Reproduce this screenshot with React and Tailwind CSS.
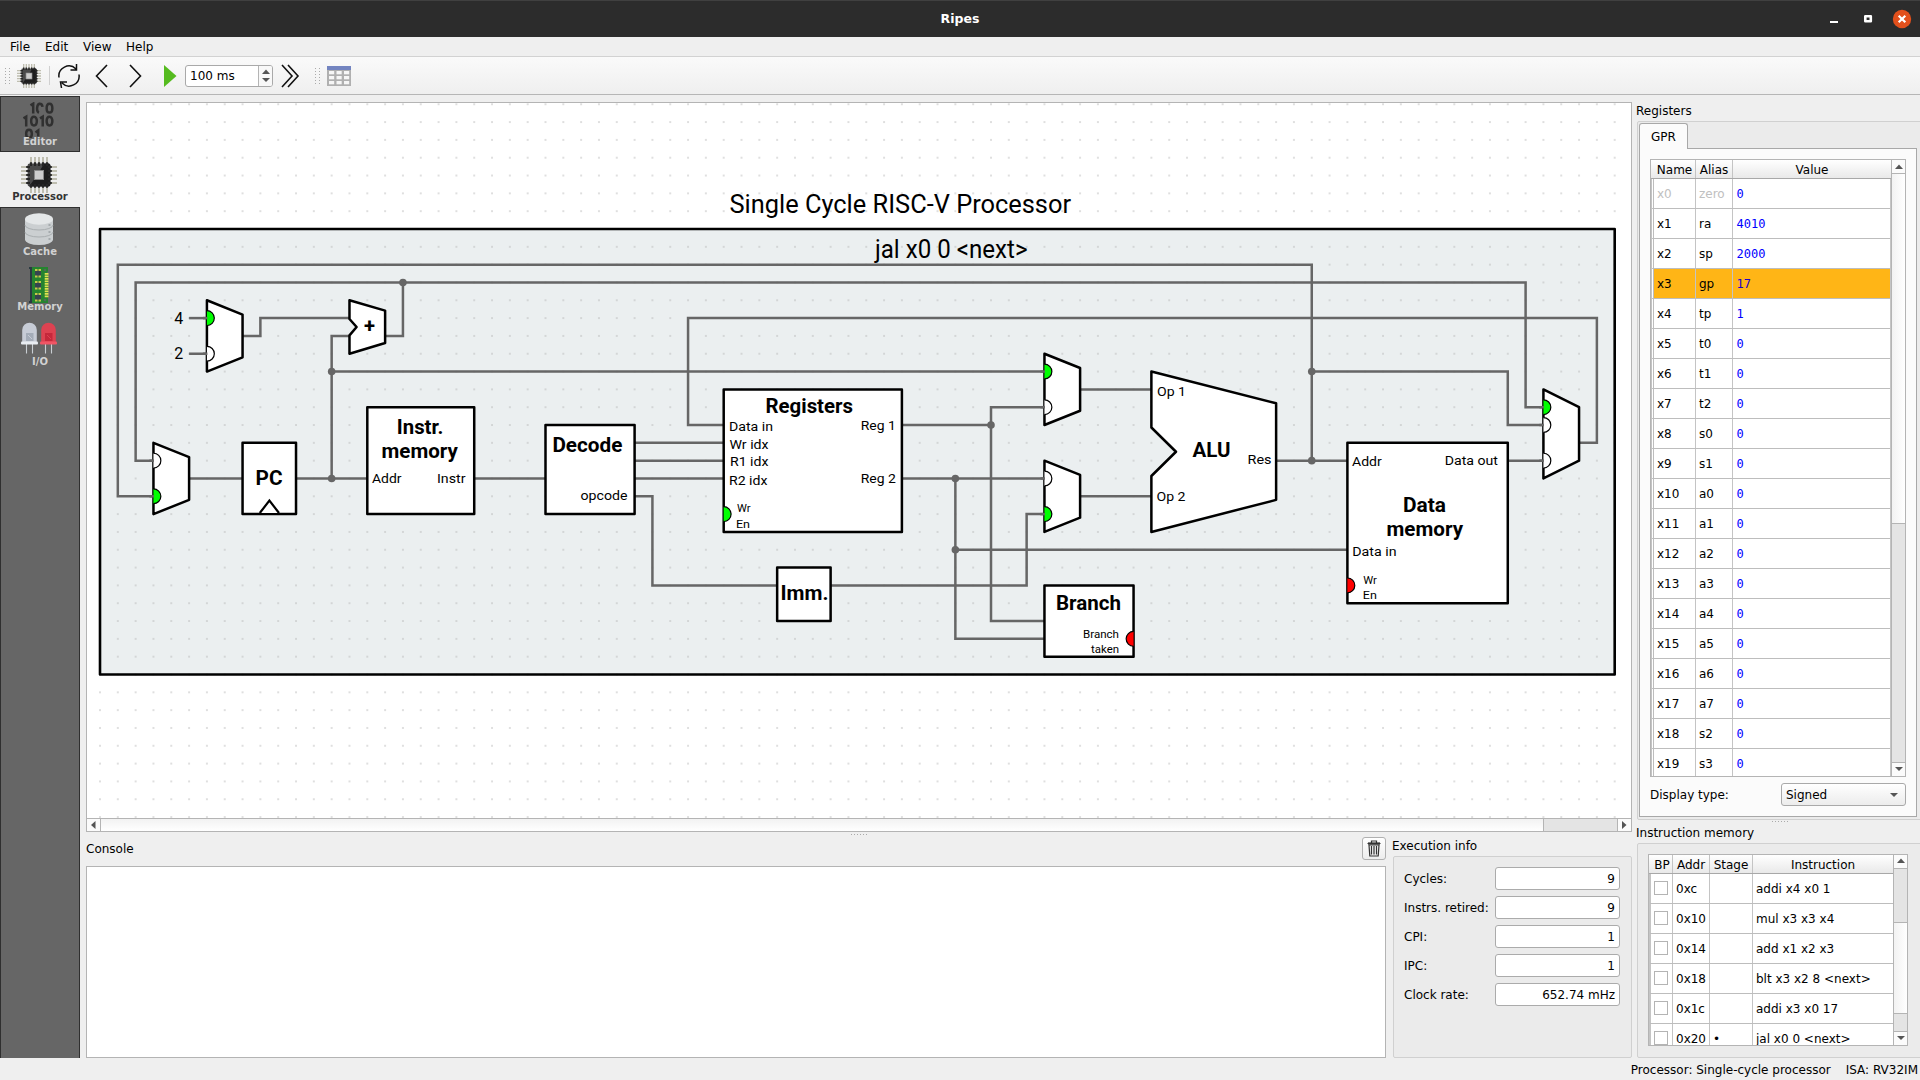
import React from "react";

const U = 17.82;
const OX = 100;
const OY = 229;
const gx = (n) => OX + n * U;
const gy = (n) => OY + n * U;
const pts = (list) => list.map(([x, y]) => `${gx(x)},${gy(y)}`).join(" ");

const WIRES = [
  [[68, 13], [68, 2], [1, 2], [1, 15], [3, 15]],
  [[66, 13], [70, 13]],
  [[16, 6], [17, 6], [17, 3]],
  [[3, 13], [2, 13], [2, 3], [80, 3], [80, 10], [81, 10]],
  [[5, 5], [6, 5]],
  [[5, 7], [6, 7]],
  [[8, 6], [9, 6], [9, 5], [14, 5]],
  [[14, 6], [13, 6], [13, 14]],
  [[13, 8], [53, 8]],
  [[5, 14], [8, 14]],
  [[11, 14], [15, 14]],
  [[21, 14], [25, 14]],
  [[30, 12], [35, 12]],
  [[30, 13], [35, 13]],
  [[30, 14], [35, 14]],
  [[30, 15], [31, 15], [31, 20], [38, 20]],
  [[35, 11], [33, 11], [33, 5], [84, 5], [84, 12], [83, 12]],
  [[45, 11], [50, 11]],
  [[53, 10], [50, 10], [50, 22], [53, 22]],
  [[45, 14], [53, 14]],
  [[48, 14], [48, 23], [53, 23]],
  [[48, 18], [70, 18]],
  [[41, 20], [52, 20], [52, 16], [53, 16]],
  [[55, 9], [59, 9]],
  [[55, 15], [59, 15]],
  [[68, 8], [79, 8], [79, 11], [81, 11]],
  [[79, 13], [81, 13]],
];

const JUNCTIONS = [[17, 3], [13, 8], [13, 14], [50, 11], [48, 14], [48, 18], [68, 8], [68, 13]];

const SHAPES = [
  [[6, 4], [8, 4.8], [8, 7.2], [6, 8]],
  [[3, 12], [5, 12.8], [5, 15.2], [3, 16]],
  [[53, 7], [55, 7.8], [55, 10.2], [53, 11]],
  [[53, 13], [55, 13.8], [55, 16.2], [53, 17]],
  [[81, 9], [83, 10], [83, 13], [81, 14]],
  [[14, 4], [16, 4.58], [16, 6.4], [14, 7], [14, 5.97], [14.4, 5.5], [14, 5.05]],
  [[59, 8], [66, 9.78], [66, 15.2], [59, 17], [59, 13.86], [60.38, 12.5], [59, 11.14]],
  [[8, 12], [11, 12], [11, 16], [8, 16]],
  [[15, 10], [21, 10], [21, 16], [15, 16]],
  [[25, 11], [30, 11], [30, 16], [25, 16]],
  [[35, 9], [45, 9], [45, 17], [35, 17]],
  [[38, 19], [41, 19], [41, 22], [38, 22]],
  [[53, 20], [58, 20], [58, 24], [53, 24]],
  [[70, 12], [79, 12], [79, 21], [70, 21]],
];

const G = "#00ff00";
const R = "#ff0000";
const W = "#ffffff";
const PORTS = [
  [6, 5, G], [6, 7, W], [3, 13, W], [3, 15, G], [53, 8, G], [53, 10, W],
  [53, 14, W], [53, 16, G], [81, 10, G], [81, 11, W], [81, 13, W],
  [35, 16, G], [70, 20, R], [58, 23, R, true],
];

// [text, left, right, baseline, size, bold]
const LABELS = [
  ["Single Cycle RISC-V Processor", 729.5, 1071, 213, 25.4],
  ["jal x0 0 <next>", 875, 1027.5, 257.5, 25.4],
  ["4", 174.3, 183.3, 323.5, 16],
  ["2", 174.3, 183.3, 359, 16],
  ["+", 364, 375, 333, 20, 1],
  ["PC", 255.5, 282.5, 484.8, 20.5, 1],
  ["Instr.", 396.8, 443.3, 434, 20.5, 1],
  ["memory", 381.5, 457.8, 458, 20.5, 1],
  ["Addr", 372, 401.5, 483, 13.6],
  ["Instr", 437, 465.5, 483, 13.6],
  ["Decode", 552.4, 622.4, 452, 20.5, 1],
  ["opcode", 580.5, 627.5, 500, 13.6],
  ["Registers", 765.5, 853, 413, 20.5, 1],
  ["Data in", 729, 773, 431, 13.6],
  ["Wr idx", 729.5, 768.5, 449, 13.6],
  ["R1 idx", 730, 768.5, 466, 13.6],
  ["R2 idx", 729, 767.5, 485, 13.6],
  ["Wr", 737, 750.5, 512, 11.5],
  ["En", 736, 750, 528, 11.5],
  ["Reg 1", 860.7, 895.8, 430, 13.6],
  ["Reg 2", 860.7, 895.8, 483, 13.6],
  ["Imm.", 780.5, 828.5, 600, 20.5, 1],
  ["Branch", 1056, 1121, 610, 20.5, 1],
  ["Branch", 1083, 1119, 638.3, 11.5],
  ["taken", 1091, 1119, 653, 11.5],
  ["ALU", 1192.5, 1230.5, 457, 20.5, 1],
  ["Op 1", 1157, 1186, 396, 13.6],
  ["Op 2", 1156.5, 1185.5, 501, 13.6],
  ["Res", 1247.5, 1271.5, 464, 13.6],
  ["Addr", 1352, 1381.7, 466, 13.6],
  ["Data out", 1444.8, 1498, 465, 13.6],
  ["Data", 1403, 1446, 512, 20.5, 1],
  ["memory", 1386.5, 1463, 536, 20.5, 1],
  ["Data in", 1352.3, 1396.5, 556, 13.6],
  ["Wr", 1363.2, 1376.8, 584, 11.5],
  ["En", 1362.8, 1376.8, 599, 11.5],
];

function Schematic() {
  return (
    <svg width="1544" height="715" viewBox="87 103 1544 715" className="block">
      <defs>
        <pattern id="dots" x={OX - 1} y={OY - 1} width={U} height={U} patternUnits="userSpaceOnUse">
          <rect x="0.2" y="0.5" width="1.6" height="1" fill="#b0b0b0" />
        </pattern>
      </defs>
      <rect x="87" y="103" width="1544" height="715" fill="#fff" />
      <rect x={gx(0)} y={gy(0)} width={85 * U} height={25 * U} fill="#ebeff0" />
      <rect x="95" y="103" width="1530" height="715" fill="url(#dots)" />
      <rect x={gx(0)} y={gy(0)} width={85 * U} height={25 * U} fill="none" stroke="#000" strokeWidth="2.6" strokeLinejoin="round" />
      {WIRES.map((w, i) => (
        <polyline key={i} points={pts(w)} fill="none" stroke="#666" strokeWidth="2.5" strokeLinecap="butt" />
      ))}
      {JUNCTIONS.map(([x, y], i) => (
        <circle key={i} cx={gx(x)} cy={gy(y)} r="3.8" fill="#666" />
      ))}
      {SHAPES.map((s, i) => (
        <polygon key={i} points={pts(s)} fill="#fff" stroke="#000" strokeWidth="2.5" strokeLinejoin="round" />
      ))}
      {PORTS.map(([x, y, color, flip], i) => (
        <path
          key={i}
          d={`M${gx(x)} ${gy(y) - 7.4}A7.4 7.4 0 0 ${flip ? 0 : 1} ${gx(x)} ${gy(y) + 7.4}`}
          fill={color}
          stroke="#000"
          strokeWidth="1.2"
        />
      ))}
      {PORTS.slice(0, 11).map(([x, y], i) => (
        <path key={i} d={`M${gx(x) - 4} ${gy(y)}h4.5`} stroke="#666" strokeWidth="2.5" />
      ))}
      <path d="M259.800 513L269.400 500.500L279 513" fill="#fff" stroke="#000" strokeWidth="2.2" />
      {LABELS.map(([t, l, r, b, s, bold], i) => (
        <text
          key={i}
          x={l}
          y={b}
          fontSize={s}
          fontWeight={bold ? 700 : 400}
          textLength={r - l}
          lengthAdjust="spacingAndGlyphs"
          className="font-['Roboto',sans-serif]"
          fill="#000"
        >
          {t}
        </text>
      ))}
    </svg>
  );
}

function Chip({ size }) {
  const legs = [10, 14, 18, 22, 26];
  return (
    <svg width={size} height={size} viewBox="0 0 36 36" className="block shrink-0">
      {legs.map((p) => (
        <path key={p} d={`M${p} 0V36M0 ${p}H36`} stroke="#bfbeb0" strokeWidth="2" />
      ))}
      <rect x="6.600" y="6.600" width="22.800" height="22.800" rx="2" fill="#4a4a4a" />
      <path d="M28 6.600L23 6.600L17 17L8 29.400H27.400a2 2 0 0 0 2 -2V8Z" fill="#1e1e1e" />
      {legs.map((p) => (
        <path key={p} d={`M${p} 5.200V9M${p} 27V30.800M5.200 ${p}H9M27 ${p}H30.800`} stroke="#262626" strokeWidth="2.200" />
      ))}
      <rect x="13.500" y="13.500" width="9" height="9" fill="#cdcdcd" stroke="#8a8a8a" strokeWidth="1" />
    </svg>
  );
}

function Binary() {
  return (
    <svg width="36" height="36" viewBox="0 0 36 36" className="block" fill="none" stroke="#303030" strokeWidth="2.5">
      <path d="M9.500 3.300L12.200 1.700V11.500M28.500 1.700c-3.800 0-3.800 8.900 0 8.900s3.800-8.900 0-8.900M19 1.700c-3.600 0-3.800 8-1 8.900M18.500 1.700c2.200 0 2.900 1.200 3 3.200" />
      <path d="M2.500 16.300L5.200 14.700V24.500M13 14.700c-3.800 0-3.800 8.700 0 8.700s3.800-8.700 0-8.700M19 16.300L21.700 14.700V24.500M28.500 14.700c-3.800 0-3.800 8.700 0 8.700s3.800-8.700 0-8.700" />
      <path d="M8 27.700c-3.800 0-3.800 8.300 0 8.300s3.800-8.300 0-8.300M14.500 30.500L17.200 28.500V34.500" />
    </svg>
  );
}

function Database() {
  return (
    <svg width="36" height="36" viewBox="0 0 36 36" className="block">
      <path d="M4 7V27.500a14 5.500 0 0 0 28 0V7Z" fill="#cbcfd1" />
      <ellipse cx="18" cy="7" rx="14" ry="5.800" fill="#e4e7e8" />
      <path d="M4 13a14 5 0 0 0 28 0M4 20a14 5 0 0 0 28 0" fill="none" stroke="#a9aeb0" strokeWidth="1" />
      <path d="M27.500 13h2M27.500 20h2M27.500 27h2" stroke="#999fa1" strokeWidth="1.500" />
    </svg>
  );
}

function Ram() {
  return (
    <svg width="36" height="36" viewBox="0 0 36 36" className="block">
      <path d="M8 0H12V36H8V34H9V2H8Z" fill="#2b3a42" />
      <path d="M11 0H27V4a2 2 0 0 0 0 3V36H11Z" fill="#25842f" />
      {[3, 15, 27].map((y) => (
        <g key={y}>
          <rect x="14" y={y} width="6" height="6.500" fill="#36444f" />
          <path d={`M14 ${y}h2.500M17.500 ${y}h2.500M14 ${y + 6.500}h2.500M17.500 ${y + 6.500}h2.500`} stroke="#c6c84a" strokeWidth="1.800" />
        </g>
      ))}
      <path d="M25.600 6V31" stroke="#dfe052" strokeWidth="3.800" strokeDasharray="1.700 .8" />
      <circle cx="24" cy="3" r="1.300" fill="#54655a" />
      <circle cx="24" cy="33" r="1.300" fill="#54655a" />
    </svg>
  );
}

function Leds() {
  const led = (x, body, base, core) => (
    <g>
      <path d={`M${x + 5.500} 22V31.500M${x + 11.500} 22V31.500`} stroke="#c9ced3" strokeWidth="1.100" />
      <path d={`M${x + 1.200} 20V8a7.300 7.300 0 0 1 14.600 0V20Z`} fill={body} />
      <rect x={x + 5} y="11" width="7.500" height="8" fill={core} />
      <path d={`M${x + 7} 13L${x + 11} 17`} stroke={body} strokeWidth="1" />
      <rect x={x} y="19.500" width="17" height="3" rx="1" fill={base} />
    </g>
  );
  return (
    <svg width="36" height="36" viewBox="0 0 36 36" className="block">
      {led(0, "#c7ccd6", "#e9edf2", "#a4acb8")}
      {led(19, "#dd4251", "#f05565", "#c5283b")}
    </svg>
  );
}

function SideTab({ icon, label, className }) {
  return (
    <div className={`h-[55px] flex flex-col items-center shrink-0 ${className}`}>
      <div className="pr-[2px]">{icon}</div>
      <span className="text-[10px] font-bold leading-[12px] -mt-[2px]">{label}</span>
    </div>
  );
}

function Arrow({ dir }) {
  const d = { up: "M1 6L5 1.500L9 6Z", down: "M1 2H9L5 6Z", left: "M6.500 0V8L2 4Z", right: "M3 0V8L7.500 4Z" }[dir];
  return (
    <svg width="10" height="8" viewBox="0 0 10 8" className="block">
      <path d={d} fill="#555" />
    </svg>
  );
}

function Handle({ className = "" }) {
  return (
    <div className={`grid grid-cols-2 gap-x-[3px] gap-y-[2px] w-[5px] ${className}`}>
      {Array.from({ length: 12 }).map((_, i) => (
        <div key={i} className="w-px h-px bg-[#aaa]" />
      ))}
    </div>
  );
}

const REGS = [
  ["x0", "zero", "0"], ["x1", "ra", "4010"], ["x2", "sp", "2000"], ["x3", "gp", "17"], ["x4", "tp", "1"],
  ["x5", "t0", "0"], ["x6", "t1", "0"], ["x7", "t2", "0"], ["x8", "s0", "0"], ["x9", "s1", "0"],
  ["x10", "a0", "0"], ["x11", "a1", "0"], ["x12", "a2", "0"], ["x13", "a3", "0"], ["x14", "a4", "0"],
  ["x15", "a5", "0"], ["x16", "a6", "0"], ["x17", "a7", "0"], ["x18", "s2", "0"], ["x19", "s3", "0"],
];

const INSTRS = [
  ["0xc", "", "addi x4 x0 1"], ["0x10", "", "mul x3 x3 x4"], ["0x14", "", "add x1 x2 x3"],
  ["0x18", "", "blt x3 x2 8 <next>"], ["0x1c", "", "addi x3 x0 17"], ["0x20", "•", "jal x0 0 <next>"],
];

const INFO = [["Cycles:", "9"], ["Instrs. retired:", "9"], ["CPI:", "1"], ["IPC:", "1"], ["Clock rate:", "652.74 mHz"]];

const HEAD = "flex items-center justify-center border-r border-[#c4c4c4] pt-[2px]";

function RegistersTable() {
  return (
    <div className="flex h-[618px] border border-[#b4b4b4] bg-white overflow-hidden">
      <div className="w-[240px] flex flex-col">
        <div className="h-[19px] shrink-0 flex border-b border-[#a8a8a8] bg-gradient-to-b from-white to-[#e9e9e9]">
          <div className={`${HEAD} w-[45px] pl-[3px]`}>Name</div>
          <div className={`${HEAD} w-[37px]`}>Alias</div>
          <div className="flex-1 flex items-center justify-center pt-[2px]">Value</div>
        </div>
        <div className="flex-1 overflow-hidden border-l border-[#c4c4c4]">
          {REGS.map(([n, a, v]) => (
            <div key={n} className="flex">
              <div className="w-px border-b border-[#c4c4c4]" />
              <div className={`flex h-[30px] w-[237px] border-l border-b border-[#bdbdbd] ${n === "x3" ? "bg-[#ffb516]" : ""} ${n === "x0" ? "text-[#c0c0c0]" : ""}`}>
                <div className="w-[42px] pl-[3px] flex items-center border-r border-[#c4c4c4]">{n}</div>
                <div className="w-[37px] pl-[3px] flex items-center border-r border-[#c4c4c4]">{a}</div>
                <div className="flex-1 pl-[3.5px] flex items-center font-['DejaVu_Sans_Mono',monospace] text-[#0000ff]">
                  <span className={n === "x3" ? "text-[#2100c8]" : ""}>{v}</span>
                </div>
              </div>
              <div className="w-px bg-[#c4c4c4]" />
            </div>
          ))}
        </div>
      </div>
      <div className="flex-1 flex flex-col border-l border-[#b4b4b4]">
        <div className="h-[14px] flex items-center justify-center bg-[#fbfbfb] border-b border-[#b4b4b4]"><Arrow dir="up" /></div>
        <div className="h-[350px] bg-gradient-to-r from-[#f2f2f2] to-white border-b border-[#b4b4b4]" />
        <div className="flex-1 bg-[#e4e4e4]" />
        <div className="h-[14px] pb-px flex items-center justify-center bg-[#fbfbfb] border-t border-[#b4b4b4]"><Arrow dir="down" /></div>
      </div>
    </div>
  );
}

function InstructionTable() {
  return (
    <div className="flex h-[192px] w-[260px] border border-[#b4b4b4] bg-white overflow-hidden">
      <div className="w-[244px] flex flex-col">
        <div className="h-[19px] shrink-0 flex border-b border-[#a8a8a8] bg-gradient-to-b from-white to-[#e9e9e9]">
          <div className={`${HEAD} w-[24px] pl-[3px]`}>BP</div>
          <div className={`${HEAD} w-[37px]`}>Addr</div>
          <div className={`${HEAD} w-[43px]`}>Stage</div>
          <div className="flex-1 flex items-center justify-center pt-[2px]">Instruction</div>
        </div>
        <div className="flex-1 overflow-hidden border-l border-[#c4c4c4]">
          {INSTRS.map(([addr, st, ins]) => (
            <div key={addr} className="flex h-[30px] w-[243px] border-b border-[#bdbdbd]">
              <div className="w-[23px] pl-[3px] pb-px flex items-center border-l border-r border-[#c4c4c4]">
                <div className="w-[14px] h-[14px] border border-[#b4b4b4] bg-white" />
              </div>
              <div className="w-[37px] pl-[3px] flex items-center border-r border-[#c4c4c4]">{addr}</div>
              <div className="w-[43px] pl-[3px] flex items-center border-r border-[#c4c4c4]">{st}</div>
              <div className="flex-1 pl-[3px] flex items-center whitespace-nowrap">{ins}</div>
            </div>
          ))}
        </div>
      </div>
      <div className="flex-1 flex flex-col border-l border-[#b4b4b4]">
        <div className="h-[14px] pb-px flex items-center justify-center bg-[#fbfbfb] border-b border-[#b4b4b4]"><Arrow dir="up" /></div>
        <div className="h-[54px] bg-[#e4e4e4] border-b border-[#b4b4b4]" />
        <div className="h-[91px] bg-gradient-to-r from-[#f2f2f2] to-white border-b border-[#b4b4b4]" />
        <div className="flex-1 bg-[#e4e4e4]" />
        <div className="h-[14px] pb-px flex items-center justify-center bg-[#fbfbfb] border-t border-[#b4b4b4]"><Arrow dir="down" /></div>
      </div>
    </div>
  );
}

export default function App() {
  return (
    <div className="w-[1920px] h-[1080px] overflow-hidden flex flex-col bg-[#efefef] text-black text-[12px] leading-[14px] font-['DejaVu_Sans',sans-serif]">
      <header className="h-[37px] shrink-0 grid grid-cols-[1fr_auto_1fr] items-center bg-[#2c2c2c] border-t border-[#404040]">
        <span />
        <span className="text-white font-bold text-[12.5px]">Ripes</span>
        <div className="flex justify-end items-center pr-[8px] pb-px">
          <svg width="82" height="20" viewBox="0 0 82 20">
            <rect x="0" y="12" width="8" height="2" fill="#fff" />
            <rect x="35.300" y="7.300" width="5.500" height="5" fill="none" stroke="#fff" strokeWidth="2.600" strokeLinejoin="round" />
            <circle cx="72" cy="10" r="9.200" fill="#e2501c" />
            <path d="M68.700 6.700L75.300 13.300M75.300 6.700L68.700 13.300" stroke="#fff" strokeWidth="2.200" />
          </svg>
        </div>
      </header>

      <nav className="h-[20px] shrink-0 flex items-center pl-[10px] border-b border-[#d2d2d2]">
        <span className="w-[35px]">File</span>
        <span className="w-[38px]">Edit</span>
        <span className="w-[43px]">View</span>
        <span>Help</span>
      </nav>

      <div className="h-[38px] shrink-0 flex items-center border-b border-[#b6b6b6] bg-gradient-to-b from-[#fafafa] to-[#efefef] pl-[5px]">
        <Handle />
        <div className="ml-[7px]"><Chip size={24} /></div>
        <div className="ml-[8px] w-px h-[19px] bg-[#d0d0d0]" />
        <svg width="24" height="24" viewBox="0 0 24 24" className="ml-[7px]" fill="none" stroke="#111" strokeWidth="1.500">
          <path d="M2 13.500A10 10 0 0 1 19 5M22 10.500A10 10 0 0 1 5 19M19.500 0V6H13.500M4.500 24L3.500 18H10" />
        </svg>
        <svg width="13" height="24" viewBox="0 0 13 24" className="ml-[14px]" fill="none" stroke="#111" strokeWidth="1.600">
          <path d="M12 1L1.500 12L12 23" />
        </svg>
        <svg width="13" height="24" viewBox="0 0 13 24" className="ml-[21px]" fill="none" stroke="#111" strokeWidth="1.600">
          <path d="M1 1L11.500 12L1 23" />
        </svg>
        <svg width="13" height="22" viewBox="0 0 13 22" className="ml-[22px]">
          <path d="M0 0L12.500 11L0 22Z" fill="#55bb1f" />
        </svg>
        <div className="ml-[8px] w-[88px] h-[22px] flex border border-[#a9a9a9] rounded-[3px] bg-white overflow-hidden">
          <span className="flex-1 pl-[4px] pt-px flex items-center">100 ms</span>
          <div className="w-[14px] border-l border-[#b4b4b4] bg-[#f8f8f8] flex flex-col items-center justify-center">
            <Arrow dir="up" />
            <Arrow dir="down" />
          </div>
        </div>
        <svg width="19" height="24" viewBox="0 0 19 24" className="ml-[8px]" fill="none" stroke="#111" strokeWidth="1.600">
          <path d="M1 1L11 12L1 23M7 1L17 12L7 23" />
        </svg>
        <Handle className="ml-[15px]" />
        <svg width="24" height="20" viewBox="0 0 24 20" className="ml-[7px]">
          <rect width="24" height="20" fill="#b0b0b0" />
          <rect width="24" height="4" fill="#7384c0" />
          {[5, 10, 15].map((y) =>
            [2, 9.500, 17].map((x) => <rect key={`${x}-${y}`} x={x} y={y} width="5.200" height="3.300" fill="#f6f6f6" />)
          )}
        </svg>
      </div>

      <div className="flex h-[963px] shrink-0">
        <aside className="w-[80px] mt-[1px] flex flex-col bg-[#666] border-l border-t border-r border-[#2f2f2f] text-[#d2d2d2]">
          <SideTab icon={<Binary />} label="Editor" className="pt-[5px] border-b border-[#2f2f2f]" />
          <div className="flex -mr-px flex-col h-[56px] -ml-px border-b border-[#2f2f2f] bg-[#efefef] text-[#333]">
            <SideTab icon={<Chip size={36} />} label="Processor" className="pt-[5px]" />
          </div>
          <div className="-mt-px">
            <SideTab icon={<Database />} label="Cache" className="pt-[4px] border-t border-[#2f2f2f]" />
            <SideTab icon={<Ram />} label="Memory" className="pt-[5px]" />
            <SideTab icon={<Leds />} label="I/O" className="pt-[5px]" />
          </div>
        </aside>

        <main className="w-[1546px] ml-[6px] mt-[7px] flex flex-col">
          <section className="h-[731px] border border-[#b4b4b4] bg-white flex flex-col">
            <Schematic />
            <div className="flex-1 border-t border-[#b4b4b4] flex">
              <div className="w-[14px] flex items-center justify-center bg-[#fbfbfb] border-r border-[#b4b4b4]"><Arrow dir="left" /></div>
              <div className="w-[1443px] bg-gradient-to-b from-[#f2f2f2] to-white border-r border-[#b4b4b4]" />
              <div className="flex-1 bg-[#e4e4e4]" />
              <div className="w-[14px] pr-px flex items-center justify-center bg-[#fbfbfb] border-l border-[#b4b4b4]"><Arrow dir="right" /></div>
            </div>
          </section>
          <div className="h-[4px] pt-[2px] flex justify-center gap-[2px]">
            {[0, 1, 2, 3, 4, 5].map((i) => <i key={i} className="w-px h-px bg-[#aaa]" />)}
          </div>
          <div className="flex h-[222px]">
            <section className="w-[1300px] flex flex-col">
              <div className="h-[30px] flex items-start justify-between">
                <span className="pt-[6px]">Console</span>
                <button className="mt-[1px] w-[24px] h-[23px] border border-[#b0b0b0] rounded-[3px] bg-gradient-to-b from-white to-[#ededed] flex items-center justify-center">
                  <svg width="14" height="17" viewBox="0 0 14 17" fill="none" stroke="#333" strokeWidth="1.200">
                    <path d="M0.500 3.500H13.500M4.500 3V1H9.500V3M2 5L2.800 16H11.200L12 5Z" />
                    <path d="M1 3.500H13" strokeWidth="2.200" />
                    <path d="M4.500 6V14.500M7 6V14.500M9.500 6V14.500" />
                  </svg>
                </button>
              </div>
              <div className="flex-1 border border-[#b4b4b4] bg-white" />
            </section>
            <section className="ml-[6px] w-[240px] flex flex-col">
              <span className="h-[20px] pt-[3px]">Execution info</span>
              <div className="flex-1 ml-px border border-[#d0d0d0] rounded-[2px] bg-[#ebebeb] pt-[10px] pl-[10px] pr-[11px] flex flex-col gap-[6px]">
                {INFO.map(([k, v]) => (
                  <div key={k} className="flex items-center justify-between">
                    <span>{k}</span>
                    <span className="w-[125px] h-[23px] border border-[#ababab] rounded-[3px] bg-white flex items-center justify-end pr-[4px]">{v}</span>
                  </div>
                ))}
              </div>
            </section>
          </div>
        </main>

        <aside className="ml-[4px] w-[284px] mt-[7px] flex flex-col">
          <span className="h-[19px] pt-[2px]">Registers</span>
          <section className="h-[699px] w-[290px] ml-px border border-[#d0d0d0] rounded-[2px] bg-[#ebebeb] pt-[1px] pl-[1px] flex flex-col">
            <div className="z-10 w-[49px] h-[26px] shrink-0 border border-b-0 border-[#a8a8a8] rounded-t-[3px] bg-[#fbfbfb] flex items-center justify-center pt-px">GPR</div>
            <div className="-mt-px h-[669px] w-[278px] border border-[#a8a8a8] bg-[#fbfbfb] px-[10px] pt-[10px] flex flex-col">
              <RegistersTable />
              <div className="mt-[6px] flex items-center justify-between">
                <span className="pt-px">Display type:</span>
                <div className="w-[125px] h-[23px] border border-[#a9a9a9] rounded-[3px] bg-gradient-to-b from-white to-[#ececec] flex items-center justify-between pl-[4px] pr-[6px]">
                  <span className="pt-px">Signed</span> <Arrow dir="down" />
                </div>
              </div>
            </div>
          </section>
          <div className="h-[4px] pt-[1px] pl-[4px] flex justify-center gap-[2px]">
            {[0, 1, 2, 3, 4, 5].map((i) => <i key={i} className="w-px h-px bg-[#aaa]" />)}
          </div>
          <span className="h-[19px] pt-[2px]">Instruction memory</span>
          <section className="h-[215px] w-[290px] ml-px border border-[#d0d0d0] rounded-[2px] bg-[#ebebeb] pt-[10px] pl-[10px]">
            <InstructionTable />
          </section>
        </aside>
      </div>

      <footer className="flex-1 flex items-center justify-end gap-[15px] pr-[2px] pt-px">
        <span>Processor: Single-cycle processor</span>
        <span>ISA: RV32IM</span>
      </footer>
    </div>
  );
}
